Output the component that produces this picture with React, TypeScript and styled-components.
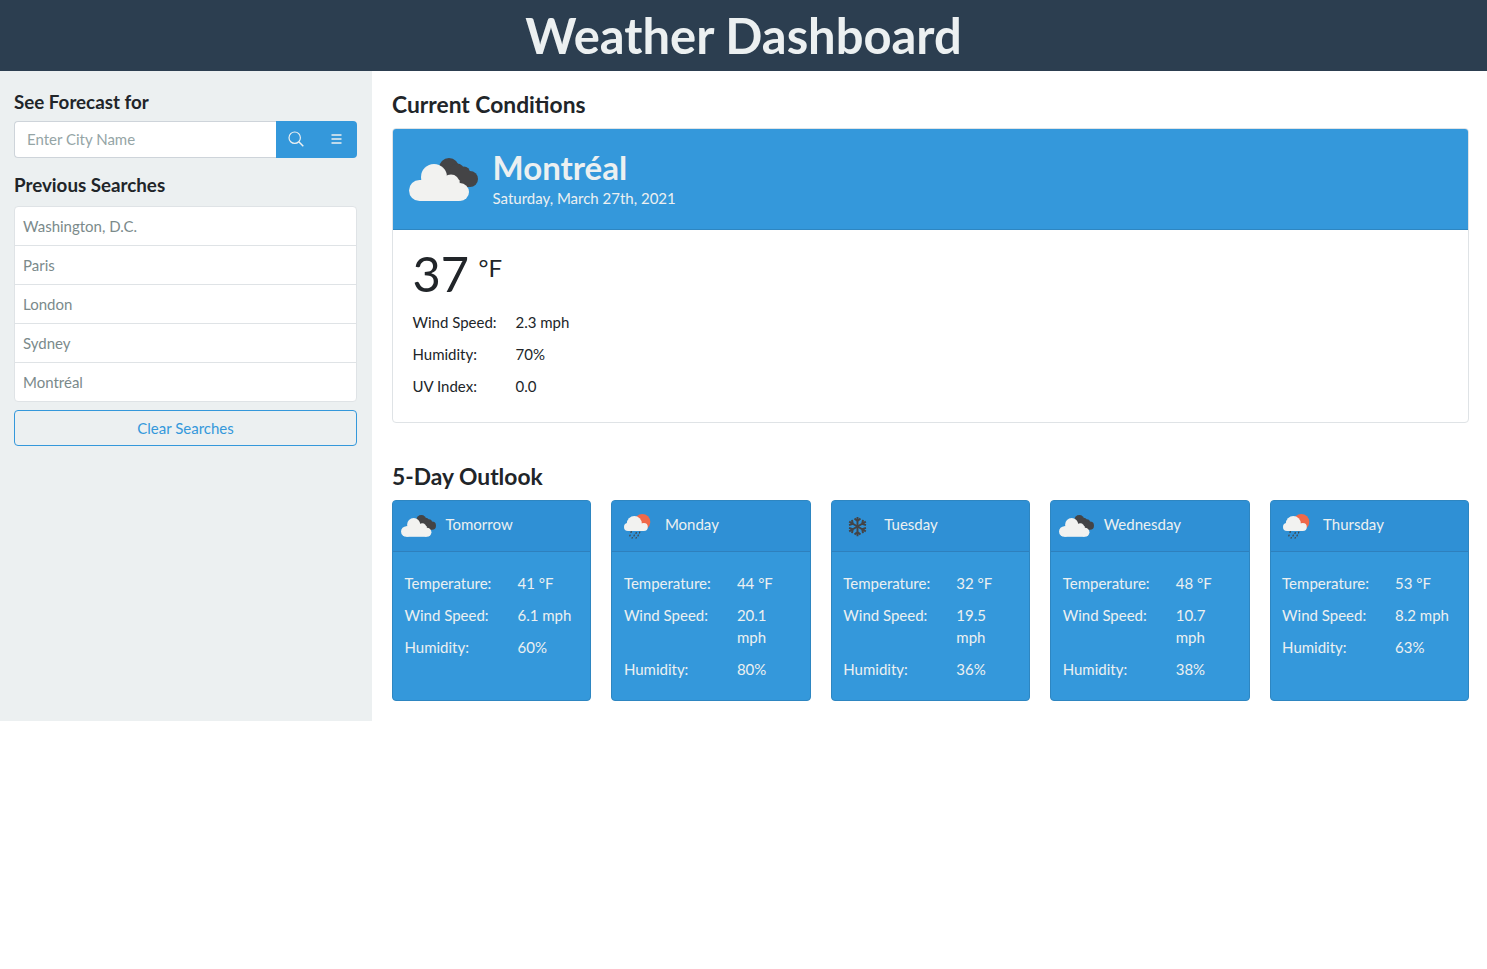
import styled, { createGlobalStyle } from 'styled-components'

const GlobalStyle = createGlobalStyle`
  html, body { margin: 0; padding: 0; background: #fff; }
  body {
    font-family: Lato, "Liberation Sans", sans-serif;
    font-size: 15px;
    line-height: 22px;
    color: #212529;
  }
  * { box-sizing: border-box; }
`

const Header = styled.header`
  height: 71px;
  background: #2c3e50;
  display: flex;
  align-items: center;
  justify-content: center;
`

const Title = styled.h1`
  margin: 0 0 1px;
  font-size: 48.9px;
  line-height: 69px;
  font-weight: 700;
  color: #ecf0f1;
`

const Layout = styled.div`
  display: grid;
  grid-template-columns: 372px 1fr;
  width: 100%;
`

const Sidebar = styled.aside`
  background: #ecf0f1;
  padding: 19px 15px 0 14px;
  height: 650px;
`

const SideHeading = styled.h2<{ $gap: number }>`
  margin: 0 0 ${(p) => p.$gap}px;
  font-size: 18.75px;
  line-height: 23px;
  font-weight: 700;
  color: #212529;
`

const SearchGroup = styled.div`
  display: flex;
  height: 37px;
  margin-bottom: 15px;
`

const CityInput = styled.input`
  flex: 1;
  min-width: 0;
  height: 37px;
  padding: 0 12px 2px;
  font: 15px/22.5px Lato, sans-serif;
  color: #495057;
  background: #fff;
  border: 1px solid #ced4da;
  border-right: 0;
  border-radius: 4px 0 0 4px;
  &::placeholder { color: #95a5a6; opacity: 1; }
`

const IconButton = styled.button<{ $last?: boolean }>`
  width: 40.5px;
  height: 37px;
  padding: 0 0 1px;
  display: flex;
  align-items: center;
  justify-content: center;
  background: #3498db;
  color: #ecf0f1;
  border: 0;
  border-radius: ${(p) => (p.$last ? '0 4px 4px 0' : '0')};
`

const SearchList = styled.ul`
  list-style: none;
  margin: 0 0 8px;
  padding: 0;
  background: #fff;
  border: 1px solid #dfe3e6;
  border-radius: 4px;
`

const SearchItem = styled.li`
  height: 39px;
  padding: 8px;
  line-height: 22.5px;
  color: #7b8a8b;
  border-top: 1px solid #dfe3e6;
  &:first-child { height: 38px; border-top: 0; }
`

const ClearButton = styled.button`
  display: block;
  width: 100%;
  height: 36px;
  padding: 0;
  font: 15px/22.5px Lato, sans-serif;
  color: #3498db;
  background: transparent;
  border: 1px solid #3498db;
  border-radius: 4px;
`

const Main = styled.main`
  padding: 19px 18px 0 20px;
  min-width: 0;
`

const SectionHeading = styled.h2`
  margin: 0 0 10px;
  font-size: 22.8px;
  line-height: 28px;
  font-weight: 700;
  color: #212529;
`

const CurrentCard = styled.section`
  height: 295px;
  margin-bottom: 39px;
  border: 1px solid #dfe3e6;
  border-radius: 4px;
  overflow: hidden;
`

const CurrentHeader = styled.div`
  height: 101px;
  display: flex;
  align-items: center;
  gap: 14.5px;
  padding: 0 16px;
  background: #3498db;
  border-bottom: 1px solid #2e86c1;
  color: #ecf0f1;
`

const CurrentTitle = styled.div`
  margin-bottom: 5px;
`

const CityName = styled.div`
  font-size: 33px;
  line-height: 42px;
  font-weight: 700;
`

const DateLine = styled.div`
  font-size: 15px;
  line-height: 20px;
`

const CurrentBody = styled.div`
  padding: 14px 19.5px;
`

const TempRow = styled.div`
  display: flex;
  align-items: flex-start;
  height: 60px;
  margin-bottom: 7px;
`

const TempValue = styled.span`
  font-size: 48.75px;
  line-height: 58px;
`

const TempUnit = styled.span`
  margin: 8px 0 0 9.5px;
  font-size: 24px;
  line-height: 32px;
`

const StatRow = styled.div<{ $labelWidth: number }>`
  display: grid;
  grid-template-columns: ${(p) => p.$labelWidth}px 1fr;
  padding-bottom: 10px;
`

const ForecastGrid = styled.div`
  display: grid;
  grid-template-columns: repeat(5, 1fr);
  gap: 20px;
`

const ForecastCard = styled.article`
  height: 201px;
  background: #3498db;
  border: 1px solid #2e86c1;
  border-radius: 4px;
  overflow: hidden;
  color: #ecf0f1;
`

const ForecastHeader = styled.div`
  height: 51px;
  display: flex;
  align-items: center;
  gap: 9.5px;
  padding: 0 8px;
  background: #2f90d5;
  border-bottom: 1px solid #2e80bd;
`

const IconSlot = styled.span`
  width: 35px;
  display: flex;
  justify-content: center;
  flex-shrink: 0;
`

const DayName = styled.span`
  margin-bottom: 4px;
`

const ForecastBody = styled.div`
  padding: 20px 11.5px 0;
`

function DarkCloud({ size }: { size: number }) {
  return (
    <svg width={size} height={(size * 43) / 69} viewBox="0 0 69 43">
      <g fill="#444446">
        <circle cx="40" cy="10" r="10" />
        <circle cx="48" cy="13" r="7.500" />
        <circle cx="55" cy="14.500" r="6" />
        <circle cx="61" cy="21" r="8" />
        <rect x="40" y="12" width="20" height="17" />
      </g>
      <g fill="#f2f2f0">
        <circle cx="10.500" cy="32.500" r="10.500" />
        <circle cx="25" cy="19" r="13" />
        <circle cx="42" cy="25" r="8.500" />
        <circle cx="51" cy="34" r="9" />
        <rect x="10.500" y="22" width="40" height="21" />
      </g>
    </svg>
  )
}

function SunRain({ size }: { size: number }) {
  return (
    <svg width={size} height={(size * 25) / 27} viewBox="0.7 0 27 25">
      <circle cx="19" cy="8" r="8" fill="#f0694a" />
      <g fill="#f2f2f0">
        <circle cx="11" cy="9.500" r="7.500" />
        <circle cx="4.700" cy="13" r="4" />
        <circle cx="20.500" cy="13" r="4" />
        <rect x="4.700" y="10" width="16" height="7" />
      </g>
      <g stroke="#444446" strokeWidth="1.200" strokeLinecap="round">
        <path d="M8 17.500L7.700 18.500" />
        <path d="M13 18.500L12.700 19.500" />
        <path d="M16.500 18L16.200 19" />
        <path d="M6.800 21L6.500 22" />
        <path d="M11 21L10.700 22" />
        <path d="M15 21L14.700 22" />
        <path d="M9 23.500L8.800 24.200" />
        <path d="M13 23.500L12.800 24.200" />
      </g>
    </svg>
  )
}

function Snow({ size }: { size: number }) {
  const arm = 'M12 12V1M12 5.800L8.600 2.800M12 5.800L15.400 2.800'
  return (
    <svg width={size} height={size} viewBox="0 0 24 24" fill="none" stroke="#444446" strokeWidth="2.200">
      {[0, 60, 120, 180, 240, 300].map((a) => (
        <path key={a} d={arm} transform={`rotate(${a} 12 12)`} />
      ))}
    </svg>
  )
}

const forecast = [
  { day: 'Tomorrow', icon: 'cloud', temp: '41 °F', wind: '6.1 mph', humidity: '60%' },
  { day: 'Monday', icon: 'rain', temp: '44 °F', wind: '20.1 mph', humidity: '80%' },
  { day: 'Tuesday', icon: 'snow', temp: '32 °F', wind: '19.5 mph', humidity: '36%' },
  { day: 'Wednesday', icon: 'cloud', temp: '48 °F', wind: '10.7 mph', humidity: '38%' },
  { day: 'Thursday', icon: 'rain', temp: '53 °F', wind: '8.2 mph', humidity: '63%' },
]

function DayIcon({ icon }: { icon: string }) {
  if (icon === 'rain') return <SunRain size={27} />
  if (icon === 'snow') return <Snow size={21} />
  return <DarkCloud size={35} />
}

const previous = ['Washington, D.C.', 'Paris', 'London', 'Sydney', 'Montréal']

export default function App() {
  return (
    <>
      <GlobalStyle />
      <Header>
        <Title>Weather Dashboard</Title>
      </Header>
      <Layout>
        <Sidebar>
          <SideHeading $gap={8}>See Forecast for</SideHeading>
          <SearchGroup>
            <CityInput placeholder="Enter City Name" />
            <IconButton aria-label="Search">
              <svg width="16" height="16" viewBox="0 0 16 16" fill="none" stroke="currentColor" strokeWidth="1.200">
                <circle cx="6.700" cy="6.700" r="5.700" />
                <path d="M10.800 10.800L15.300 15.300" strokeWidth="1.500" />
              </svg>
            </IconButton>
            <IconButton $last aria-label="Menu">
              <svg width="12" height="12" viewBox="0 0 12 12" stroke="currentColor" strokeWidth="1.300">
                <path d="M.5 2H10.500M.5 6H10.500M.5 10H10.500" />
              </svg>
            </IconButton>
          </SearchGroup>
          <SideHeading $gap={10}>Previous Searches</SideHeading>
          <SearchList>
            {previous.map((city) => (
              <SearchItem key={city}>{city}</SearchItem>
            ))}
          </SearchList>
          <ClearButton>Clear Searches</ClearButton>
        </Sidebar>
        <Main>
          <SectionHeading>Current Conditions</SectionHeading>
          <CurrentCard>
            <CurrentHeader>
              <DarkCloud size={69} />
              <CurrentTitle>
                <CityName>Montréal</CityName>
                <DateLine>Saturday, March 27th, 2021</DateLine>
              </CurrentTitle>
            </CurrentHeader>
            <CurrentBody>
              <TempRow>
                <TempValue>37</TempValue>
                <TempUnit>°F</TempUnit>
              </TempRow>
              <StatRow $labelWidth={103}><span>Wind Speed:</span><span>2.3 mph</span></StatRow>
              <StatRow $labelWidth={103}><span>Humidity:</span><span>70%</span></StatRow>
              <StatRow $labelWidth={103}><span>UV Index:</span><span>0.0</span></StatRow>
            </CurrentBody>
          </CurrentCard>
          <SectionHeading>5-Day Outlook</SectionHeading>
          <ForecastGrid>
            {forecast.map((f) => (
              <ForecastCard key={f.day}>
                <ForecastHeader>
                  <IconSlot><DayIcon icon={f.icon} /></IconSlot>
                  <DayName>{f.day}</DayName>
                </ForecastHeader>
                <ForecastBody>
                  <StatRow $labelWidth={113}><span>Temperature:</span><span>{f.temp}</span></StatRow>
                  <StatRow $labelWidth={113}><span>Wind Speed:</span><span>{f.wind}</span></StatRow>
                  <StatRow $labelWidth={113}><span>Humidity:</span><span>{f.humidity}</span></StatRow>
                </ForecastBody>
              </ForecastCard>
            ))}
          </ForecastGrid>
        </Main>
      </Layout>
    </>
  )
}
